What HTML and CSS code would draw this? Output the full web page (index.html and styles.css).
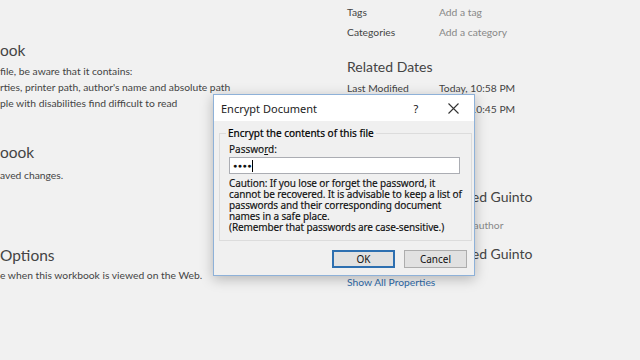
FILE: index.html
```html
<!DOCTYPE html>
<html lang="en">
<head>
  <meta charset="UTF-8">
  <title>Info - Encrypt Document</title>
  <link rel="stylesheet" href="styles.css">
</head>
<body>
  <div class="backstage">
    <!-- Left: workbook sections (scrolled, cut at the left edge) -->
    <div class="sections">
      <div class="section inspect">
        <h2>ook</h2>
        <p>file, be aware that it contains:</p>
        <p>rties, printer path, author's name and absolute path</p>
        <p>ple with disabilities find difficult to read</p>
      </div>
      <div class="section manage">
        <h2>oook</h2>
        <p>aved changes.</p>
      </div>
      <div class="section browser">
        <h2>Options</h2>
        <p>e when this workbook is viewed on the Web.</p>
      </div>
    </div>

    <!-- Right: properties -->
    <div class="props">
      <div class="row"><span class="label">Tags</span><span class="value muted">Add a tag</span></div>
      <div class="row"><span class="label">Categories</span><span class="value muted">Add a category</span></div>

      <h3>Related Dates</h3>
      <div class="row date"><span class="label">Last Modified</span><span class="value">Today, 10:58 PM</span></div>
      <div class="row date"><span class="label">Created</span><span class="value">Today, 10:45 PM</span></div>
      <div class="row date"><span class="label">Last Printed</span><span class="value"></span></div>

      <h3 class="people">Related People</h3>
      <div class="row person"><span class="label">Author</span><span class="value name">Ahmed Guinto</span></div>
      <div class="row add-author"><span class="label"></span><span class="value muted">Add an author</span></div>
      <div class="row person modified-by"><span class="label">Last Modified By</span><span class="value name">Ahmed Guinto</span></div>

      <a class="show-all" href="#">Show All Properties</a>
    </div>
  </div>

  <!-- Encrypt Document dialog -->
  <div class="dialog">
    <div class="titlebar">
      <span class="title">Encrypt Document</span>
      <span class="help">?</span>
      <span class="close">
        <svg width="11" height="11" viewBox="0 0 11 11"><path d="M0.5 0.5 L10.5 10.5 M10.5 0.5 L0.5 10.5" stroke="#333" stroke-width="1.1" fill="none"/></svg>
      </span>
    </div>
    <div class="dialog-body">
      <fieldset class="group">
        <legend>Encrypt the contents of this file</legend>
        <label class="field-label">Passwo<u>r</u>d:</label>
        <div class="input">&#9679;&#9679;&#9679;&#9679;<span class="caret"></span></div>
        <p class="caution">Caution: If you lose or forget the password, it<br>cannot be recovered. It is advisable to keep a list of<br>passwords and their corresponding document<br>names in a safe place.<br>(Remember that passwords are case-sensitive.)</p>
      </fieldset>
      <div class="buttons">
        <button class="default">OK</button>
        <button>Cancel</button>
      </div>
    </div>
  </div>
</body>
</html>
```

FILE: styles.css
```css
/* Backstage info page */
body {
  margin: 0;
  background-color: #f1f1f1;
  font-family: Lato, "Noto Sans", sans-serif;
  color: #444;
  width: 640px;
  height: 360px;
  overflow: hidden;
  position: relative;
}

.backstage {
  display: flex;
}

.sections {
  width: 347px;
  padding-top: 38px;
}

.section h2 {
  margin: 0;
  font-size: 15.5px;
  font-weight: normal;
  line-height: 24px;
  color: #444;
}

.section p {
  margin: 0;
  font-size: 10.3px;
  line-height: 16px;
  white-space: nowrap;
}

.inspect h2 {
  margin-bottom: 1px;
}

.manage {
  margin-top: 29px;
}

.manage h2 {
  margin-bottom: 3px;
}

.browser {
  margin-top: 60px;
}

.props {
  padding-top: 2px;
}

.row {
  display: flex;
  font-size: 10.3px;
  line-height: 20px;
}

.row.date {
  line-height: 21px;
}

.label {
  width: 92px;
}

.value {
  color: #444;
}

.muted {
  color: #888;
}

.props h3 {
  margin: 15px 0 0;
  font-size: 14px;
  font-weight: normal;
  line-height: 20px;
}

.props h3 + .row {
  margin-top: 1px;
}

.props h3.people {
  margin-bottom: 7px;
}

.row.person {
  line-height: 28px;
}

.row.add-author {
  margin-top: 4px;
}

.row.modified-by {
  margin-top: 5px;
}

.name {
  font-size: 14px;
  padding-left: 4px;
}

.show-all {
  display: block;
  font-size: 10.3px;
  line-height: 14px;
  color: #2f6aa8;
  text-decoration: none;
  margin-top: 7px;
}

/* Dialog */
.dialog {
  position: absolute;
  left: 213px;
  top: 94px;
  width: 260px;
  height: 180px;
  border: 1px solid #8eb1d8;
  background-color: #f0f0f0;
  box-shadow: 0 3px 12px rgba(0, 0, 0, 0.25);
  font-family: "Noto Sans", sans-serif;
  font-size: 10px;
  color: #111;
}

.titlebar {
  height: 26px;
  background-color: #fff;
  display: flex;
  align-items: center;
  padding-left: 7px;
}

.title {
  flex: 1;
  font-size: 11px;
  color: #222;
}

.help {
  font-size: 11px;
  width: 38px;
  text-align: center;
  margin-right: -1px;
}

.close {
  width: 38px;
  display: flex;
  justify-content: center;
  padding-right: 2px;
}

.dialog-body {
  padding: 5px 5px 0;
}

.group {
  margin: 0;
  border: 1px solid #dcdcdc;
  padding: 0 9px 10px;
  height: 103px;
}

.group legend {
  padding: 0 2px;
  margin-left: -3px;
  font-size: 10px;
  color: #000;
  -webkit-text-stroke: 0.2px #000;
}

.field-label {
  display: block;
  margin-top: 3px;
  line-height: 13px;
  -webkit-text-stroke: 0.15px #111;
}

.input {
  margin-top: 1px;
  height: 15px;
  width: 226px;
  background-color: #fff;
  border: 1px solid #abadb3;
  display: flex;
  align-items: center;
  padding-left: 3px;
  font-size: 7px;
  letter-spacing: 0.5px;
  box-sizing: content-box;
}

.caret {
  width: 1px;
  height: 12px;
  background-color: #000;
}

.caution {
  margin: 4px 0 0;
  line-height: 11px;
  font-size: 10px;
  letter-spacing: -0.12px;
  white-space: nowrap;
  -webkit-text-stroke: 0.15px #111;
}

.buttons {
  display: flex;
  justify-content: flex-end;
  gap: 9px;
  margin-top: 9px;
  padding-right: 2px;
}

button {
  width: 63px;
  height: 18px;
  font-family: inherit;
  font-size: 10px;
  background-color: #e1e1e1;
  border: 1px solid #adadad;
  color: #111;
  padding: 0;
}

button.default {
  border: 2px solid #2d6fb0;
}
```
